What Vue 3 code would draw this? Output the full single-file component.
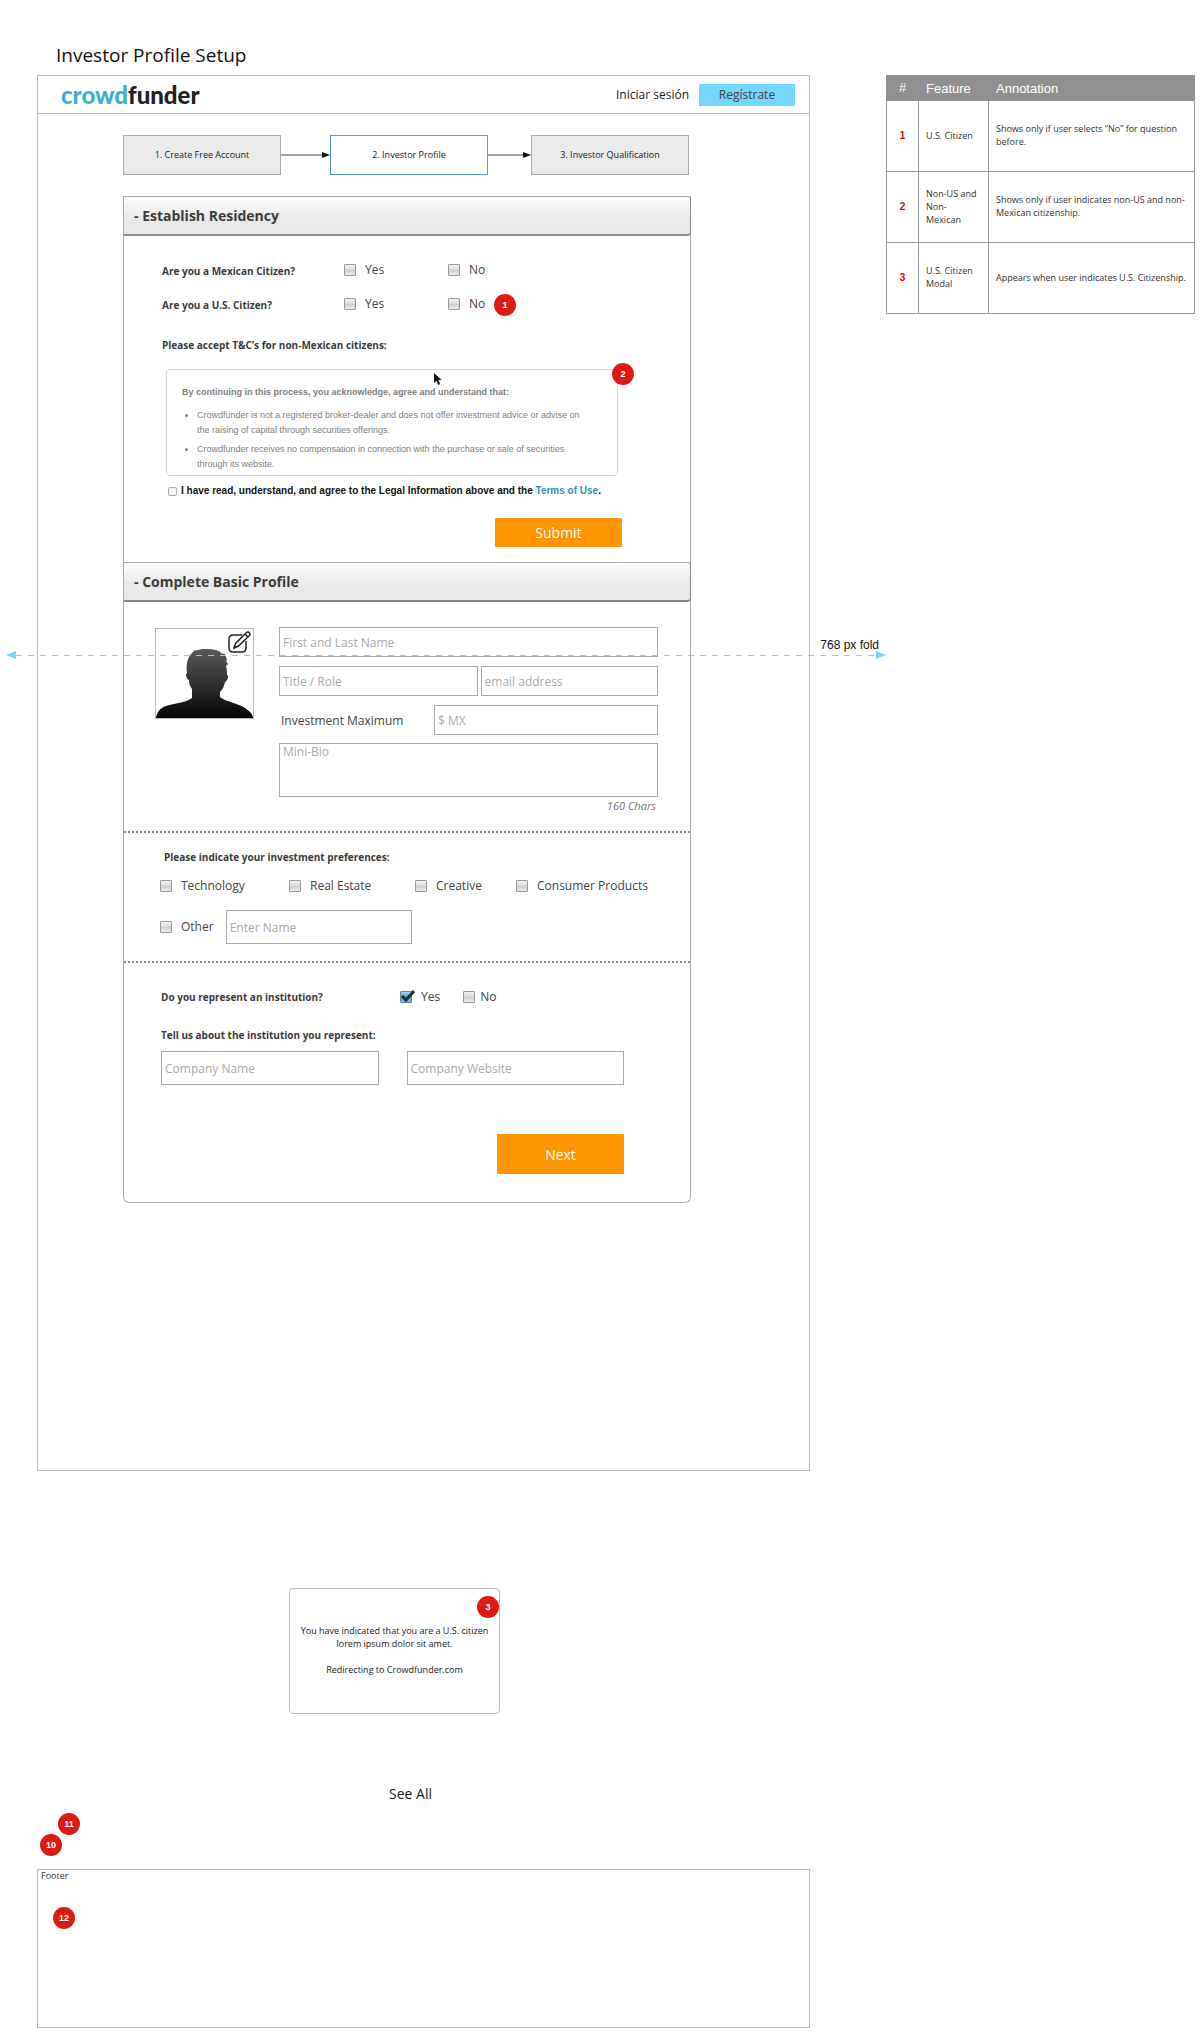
<script setup>
import { ref } from 'vue'

const annotations = [
  { id: 1, feature: 'U.S. Citizen', text: 'Shows only if user selects “No” for question before.' },
  { id: 2, feature: 'Non-US and Non-Mexican', text: 'Shows only if user indicates non-US and non-Mexican citizenship.' },
  { id: 3, feature: 'U.S. Citizen Modal', text: 'Appears when user indicates U.S. Citizenship.' },
]
const preferences = ['Technology', 'Real Estate', 'Creative', 'Consumer Products']
const institutionYes = ref(true)
</script>

<template>
  <div class="page">
    <h1 class="title">Investor Profile Setup</h1>

    <div class="columns">
      <main class="frame">
        <header class="topbar">
          <a class="logo" href="#"><span class="logo-blue">crowd</span>funder</a>
          <nav class="account">
            <a class="signin" href="#">Iniciar sesión</a>
            <button class="register" type="button">Regístrate</button>
          </nav>
        </header>

        <div class="content">
          <div class="steps">
            <div class="step">1. Create Free Account</div>
            <svg class="arrow first" viewBox="0 0 49 8"><path d="M0 4H43" /><path class="head" d="M41 1L49 4L41 7Z" /></svg>
            <div class="step current">2. Investor Profile</div>
            <svg class="arrow" viewBox="0 0 43 8"><path d="M0 4H37" /><path class="head" d="M35 1L43 4L35 7Z" /></svg>
            <div class="step">3. Investor Qualification</div>
          </div>

          <div class="panel">
            <h2 class="panel-head">- Establish Residency</h2>
            <form class="residency" @submit.prevent>
              <div class="question">
                <span class="bold">Are you a Mexican Citizen?</span>
                <label class="check"><input type="checkbox" />Yes</label>
                <label class="check"><input type="checkbox" />No</label>
              </div>
              <div class="question">
                <span class="bold">Are you a U.S. Citizen?</span>
                <label class="check"><input type="checkbox" />Yes</label>
                <label class="check"><input type="checkbox" />No</label>
                <span class="badge badge-1">1</span>
              </div>
              <p class="bold accept">Please accept T&amp;C’s for non-Mexican citizens:</p>
              <div class="terms">
                <p class="terms-title">By continuing in this process, you acknowledge, agree and understand that:</p>
                <ul>
                  <li>Crowdfunder is not a registered broker-dealer and does not offer investment advice or advise on the raising of capital through securities offerings.</li>
                  <li>Crowdfunder receives no compensation in connection with the purchase or sale of securities through its website.</li>
                </ul>
                <span class="badge badge-2">2</span>
                <svg class="cursor" viewBox="0 0 10 14"><path d="M1 1V11L3.400 8.800L5.200 13L7.200 12.100L5.400 8H8.600Z" /></svg>
              </div>
              <div class="agree">
                <input id="agree" type="checkbox" class="mini" />
                <label for="agree">I have read, understand, and agree to the Legal Information above and the <a href="#">Terms of Use</a>.</label>
              </div>
              <button class="action submit" type="submit">Submit</button>
            </form>

            <h2 class="panel-head">- Complete Basic Profile</h2>
            <form @submit.prevent>
              <div class="profile">
                <div class="avatar">
                  <svg viewBox="0 0 97 89">
                    <defs>
                      <linearGradient id="shade" x1="0" y1="0" x2="0" y2="1">
                        <stop offset="0" stop-color="#5a5a5a" />
                        <stop offset="1" stop-color="#050505" />
                      </linearGradient>
                    </defs>
                    <path fill="url(#shade)" d="M0 89C1 83 4 79 10 77C19 74 29 74 36 69V60C34 57 33 55 33 51C30 50 29 43 31 45C30 36 31 30 35 25L38 22L36 22L42 21L46 20L54 20L60 21L65 23L64 24L69 25L70 28L71 31L70 32L72 35L70 37C71 40 71 43 71 46C73 45 72 52 69 53C68 57 67 60 64 63V68C70 73 82 74 89 79C94 82 97 86 97 89Z" />
                  </svg>
                  <button class="edit" type="button" aria-label="Edit photo">
                    <svg viewBox="0 0 24 24">
                      <path d="M15 4H6Q2 4 2 8V17Q2 21 6 21H15Q19 21 19 17V10" />
                      <path d="M7 17L8.500 12.500L19.500 1.500Q21 0.500 22.300 1.800T22.400 4.500L11.500 15Z M18 3L21 6" />
                    </svg>
                  </button>
                </div>
                <div class="fields">
                  <input class="field" type="text" placeholder="First and Last Name" aria-label="First and Last Name" />
                  <div class="pair">
                    <input class="field role" type="text" placeholder="Title / Role" aria-label="Title / Role" />
                    <input class="field email" type="email" placeholder="email address" aria-label="email address" />
                  </div>
                  <div class="invest">
                    <label for="maximum">Investment Maximum</label>
                    <input id="maximum" class="field" type="text" placeholder="$ MX" />
                  </div>
                  <textarea class="field bio" placeholder="Mini-Bio" aria-label="Mini-Bio"></textarea>
                  <span class="chars">160 Chars</span>
                </div>
              </div>

              <div class="preferences">
                <p class="bold">Please indicate your investment preferences:</p>
                <div class="options">
                  <label v-for="name in preferences" :key="name" class="check"><input type="checkbox" />{{ name }}</label>
                </div>
                <div class="other">
                  <label class="check"><input type="checkbox" />Other</label>
                  <input class="field tall" type="text" placeholder="Enter Name" aria-label="Enter Name" />
                </div>
              </div>

              <div class="institution">
                <div class="represent">
                  <span class="bold">Do you represent an institution?</span>
                  <label class="check">
                    <span class="tick">
                      <input v-model="institutionYes" type="checkbox" />
                      <svg v-if="institutionYes" viewBox="0 0 15 13"><path d="M2 6L6 10L14 1" /></svg>
                    </span>Yes
                  </label>
                  <label class="check near"><input type="checkbox" />No</label>
                </div>
                <p class="bold">Tell us about the institution you represent:</p>
                <div class="companies">
                  <input class="field tall" type="text" placeholder="Company Name" aria-label="Company Name" />
                  <input class="field tall" type="text" placeholder="Company Website" aria-label="Company Website" />
                </div>
                <button class="action next" type="submit">Next</button>
              </div>
            </form>
          </div>
        </div>
      </main>

      <table class="notes">
        <thead>
          <tr><th class="num">#</th><th class="feature">Feature</th><th>Annotation</th></tr>
        </thead>
        <tbody>
          <tr v-for="row in annotations" :key="row.id">
            <td class="num">{{ row.id }}</td>
            <td>{{ row.feature }}</td>
            <td>{{ row.text }}</td>
          </tr>
        </tbody>
      </table>
    </div>

    <div class="below">
      <section class="modal">
        <p>You have indicated that you are a U.S. citizen lorem ipsum dolor sit amet.</p>
        <p>Redirecting to Crowdfunder.com</p>
        <span class="badge badge-3">3</span>
      </section>
      <a class="see-all" href="#">See All</a>
      <span class="badge badge-11">11</span>
      <span class="badge badge-10">10</span>
      <footer class="footer">
        Footer
        <span class="badge badge-12">12</span>
      </footer>
    </div>

    <div class="fold">
      <svg class="tip" viewBox="0 0 10 8"><path d="M10 0L0 4L10 8Z" /></svg>
      <span class="dashes"></span>
      <svg class="tip" viewBox="0 0 10 8"><path d="M0 0L10 4L0 8Z" /></svg>
      <span class="fold-label">768 px fold</span>
    </div>
  </div>
</template>

<style>
body {
  margin: 0;
  background: #fff;
}
</style>

<style scoped>
* {
  box-sizing: border-box;
}
.page {
  position: relative;
  padding: 42px 5px 10px 37px;
  font-family: "Open Sans", "Noto Sans", sans-serif;
  font-size: 12px;
  color: #444;
}
h1, h2, p, ul {
  margin: 0;
  padding: 0;
}
a {
  color: inherit;
  text-decoration: none;
}
button {
  border: 0;
  padding: 0;
  font-family: inherit;
  cursor: pointer;
}
.title {
  padding-left: 19px;
  height: 33px;
  font-size: 19px;
  line-height: 26px;
  font-weight: 400;
  color: #111;
}
.columns {
  display: flex;
  align-items: flex-start;
  gap: 76px;
}
.frame {
  flex: 1;
  min-width: 0;
  padding-bottom: 267px;
  border: 1px solid #bbb;
}
.topbar {
  display: flex;
  align-items: center;
  justify-content: space-between;
  height: 38px;
  padding: 0 14px 0 23px;
  border-bottom: 1px solid #bbb;
}
.logo {
  font-family: "Lato", sans-serif;
  font-size: 24px;
  line-height: 30px;
  font-weight: 900;
  color: #222;
}
.logo-blue {
  color: #3bafd2;
}
.account {
  display: flex;
  align-items: center;
  gap: 10px;
}
.signin {
  color: #222;
}
.register {
  width: 96px;
  height: 22px;
  border-radius: 1px;
  background: #74d5ff;
  font-size: 12px;
  color: #444;
}
.content {
  padding: 21px 118px 0 85px;
}
.steps {
  display: flex;
  align-items: center;
  margin: 0 2px 21px 0;
}
.step {
  flex: 1;
  height: 40px;
  border: 1px solid #aaa;
  background: #eaeaea;
  font-size: 9px;
  line-height: 38px;
  text-align: center;
  color: #222;
}
.step.current {
  border-color: #5a98d4;
  background: #fff;
}
.arrow {
  width: 43px;
  height: 8px;
  fill: none;
  stroke: #444;
}
.arrow.first {
  width: 49px;
}
.arrow .head {
  fill: #111;
  stroke: none;
}
.panel {
  border: 1px solid #aaa;
  border-top: 0;
  border-radius: 3px 3px 6px 6px;
}
.panel-head {
  height: 40px;
  margin: 0 -1px;
  padding-left: 10px;
  border: 1px solid #aaa;
  border-right-color: #888;
  border-bottom: 2px solid #888;
  border-radius: 2px 3px 4px 2px;
  background: linear-gradient(#fdfdfd, #e9e9e9 60%, #e8e8e8);
  font-size: 14px;
  line-height: 37px;
  font-weight: 700;
  color: #3b3b3b;
}
.bold {
  font-size: 10px;
  line-height: 14px;
  font-weight: 700;
  color: #3b3b3b;
}
.residency {
  display: flex;
  flex-direction: column;
  padding: 24px 68px 15px 38px;
}
.question {
  position: relative;
  display: flex;
  align-items: center;
  height: 20px;
  margin-bottom: 14px;
}
.question .bold {
  width: 182px;
  padding-top: 2px;
}
.question .check {
  width: 104px;
}
.check {
  display: flex;
  align-items: center;
  gap: 9px;
  line-height: 18px;
  white-space: nowrap;
}
.check input {
  appearance: none;
  flex: none;
  display: block;
  width: 12px;
  height: 12px;
  margin: 0;
  border: 1px solid #999;
  border-radius: 1px;
  background: linear-gradient(#f3f3f3, #dcdcdc 45%, #cfcfcf 55%, #ececec);
}
.check input:checked {
  border-color: #6687a5;
  background: linear-gradient(#a9d2f5, #4ea2e6 50%, #6fbcf3);
}
.tick {
  position: relative;
}
.tick svg {
  position: absolute;
  left: 0;
  top: -1px;
  width: 15px;
  height: 13px;
  fill: none;
  stroke: #2b2b2b;
  stroke-width: 3;
}
.badge {
  position: absolute;
  width: 22px;
  height: 22px;
  border-radius: 50%;
  background: #dc1b14;
  font-family: "Liberation Sans", Arial, sans-serif;
  font-size: 9px;
  line-height: 22px;
  font-weight: 700;
  text-align: center;
  color: #fff;
}
.badge-1 {
  left: 332px;
  top: 0;
}
.accept {
  margin-top: 10px;
}
.terms {
  position: relative;
  min-height: 107px;
  margin: 17px 4px 0;
  padding: 15px 26px 0 15px;
  border: 1px solid #d4d4d4;
  border-radius: 4px;
  font-family: "Liberation Sans", Arial, sans-serif;
  font-size: 9px;
  line-height: 15px;
  color: #808080;
}
.terms-title {
  font-weight: 700;
}
.terms ul {
  padding-left: 15px;
}
.terms li {
  margin-top: 4px;
}
.terms li:first-child {
  margin-top: 8px;
}
.badge-2 {
  right: -17px;
  top: -7px;
}
.cursor {
  position: absolute;
  left: 266px;
  top: 2px;
  width: 10px;
  height: 14px;
  fill: #111;
}
.agree {
  display: flex;
  align-items: center;
  gap: 4px;
  margin: 8px 0 0 6px;
  font-family: "Liberation Sans", Arial, sans-serif;
  font-size: 10px;
  line-height: 14px;
  font-weight: 700;
  color: #111;
  white-space: nowrap;
}
.agree a {
  color: #3490b0;
}
.mini {
  appearance: none;
  flex: none;
  width: 9px;
  height: 9px;
  margin: 0;
  border: 1px solid #aaa;
  border-radius: 2px;
  background: #f5f5f5;
}
.action {
  align-self: flex-end;
  width: 127px;
  border-radius: 1px;
  background: #ff9500;
  font-size: 14px;
  color: #fff;
}
.submit {
  height: 29px;
  margin-top: 20px;
}
.field {
  display: block;
  width: 100%;
  height: 30px;
  margin: 0;
  padding: 0 3px;
  border: 1px solid #aaa;
  border-radius: 0;
  background: #fff;
  font-family: inherit;
  font-size: 12px;
  color: #444;
}
.field::placeholder {
  color: #aaa;
  opacity: 1;
}
.field.tall {
  height: 34px;
}
.profile {
  display: flex;
  align-items: flex-start;
  gap: 25px;
  padding: 25px 32px 17px 31px;
}
.avatar {
  position: relative;
  flex: none;
  width: 99px;
  height: 91px;
  margin-top: 1px;
  border: 1px solid #bbb;
}
.avatar > svg {
  display: block;
  width: 97px;
  height: 89px;
}
.edit {
  position: absolute;
  right: 2px;
  top: 2px;
  width: 24px;
  height: 24px;
  background: none;
}
.edit svg {
  display: block;
  fill: none;
  stroke: #222;
  stroke-width: 1.500;
}
.fields {
  flex: 1;
  min-width: 0;
  display: flex;
  flex-direction: column;
}
.pair {
  display: flex;
  gap: 3px;
  margin: 9px 0;
}
.role {
  flex: 199;
}
.email {
  flex: 177;
}
.invest {
  display: flex;
  align-items: center;
  padding-left: 2px;
}
.invest label {
  flex: none;
  width: 153px;
}
.bio {
  height: 54px;
  margin-top: 8px;
  padding-top: 0;
  line-height: 16px;
  resize: none;
}
.chars {
  align-self: flex-end;
  margin: 1px 2px 0 0;
  font-size: 11px;
  line-height: 16px;
  font-style: italic;
  color: #777;
}
.preferences {
  padding: 17px 41px 17px 36px;
  border-top: 2px dotted #888;
}
.preferences .bold {
  padding-left: 4px;
}
.options {
  display: grid;
  grid-template-columns: 129fr 126fr 101fr 133fr;
  margin-top: 13px;
}
.other {
  display: flex;
  align-items: center;
  gap: 12px;
  margin-top: 15px;
}
.other .field {
  width: 186px;
}
.institution {
  display: flex;
  flex-direction: column;
  padding: 25px 66px 28px 37px;
  border-top: 2px dotted #888;
}
.represent {
  display: flex;
  align-items: center;
  margin-bottom: 22px;
}
.represent .bold {
  width: 239px;
}
.check.near {
  gap: 5px;
  margin-left: 23px;
}
.companies {
  display: flex;
  gap: 28px;
  margin-top: 9px;
}
.next {
  height: 40px;
  margin-top: 49px;
}
.notes {
  flex: none;
  width: 309px;
  border-collapse: collapse;
  table-layout: fixed;
  font-size: 9px;
  line-height: 13px;
  color: #333;
}
.notes th {
  height: 25px;
  padding: 0 7px;
  border: 1px solid #909090;
  background: #909090;
  font-family: "Liberation Sans", Arial, sans-serif;
  font-size: 13px;
  font-weight: 400;
  text-align: left;
  color: #fff;
}
.notes td {
  height: 71px;
  padding: 0 7px 2px;
  border: 1px solid #999;
}
.notes .num {
  width: 32px;
  padding: 0 0 2px;
  text-align: center;
}
.notes td.num {
  font-family: "Liberation Sans", Arial, sans-serif;
  font-size: 10px;
  font-weight: 700;
  color: #e60012;
}
.notes .feature {
  width: 70px;
}
.below {
  position: relative;
  display: flex;
  flex-direction: column;
  margin-right: 385px;
}
.modal {
  position: relative;
  display: flex;
  flex-direction: column;
  justify-content: center;
  gap: 13px;
  width: 211px;
  height: 126px;
  margin: 117px 0 0 252px;
  padding: 0 8px 2px;
  border: 1px solid #bbb;
  border-radius: 4px;
  font-size: 9px;
  line-height: 13px;
  text-align: center;
  color: #222;
}
.badge-3 {
  right: 0;
  top: 7px;
}
.see-all {
  align-self: center;
  margin-top: 70px;
  margin-right: 26px;
  font-size: 14px;
  line-height: 20px;
  color: #222;
}
.badge-11 {
  left: 21px;
  top: 342px;
}
.badge-10 {
  left: 3px;
  top: 363px;
}
.footer {
  position: relative;
  height: 159px;
  margin-top: 65px;
  padding-left: 3px;
  border: 1px solid #bbb;
  font-size: 9px;
  line-height: 12px;
  color: #333;
}
.badge-12 {
  left: 15px;
  top: 37px;
}
.fold {
  position: absolute;
  left: 6px;
  right: 314px;
  top: 651px;
  display: flex;
  align-items: center;
}
.tip {
  flex: none;
  width: 10px;
  height: 8px;
  fill: #74d5ff;
}
.dashes {
  flex: 1;
  height: 1px;
  background: repeating-linear-gradient(90deg, #74d5ff 0 6px, transparent 6px 12px);
}
.fold-label {
  position: absolute;
  right: 7px;
  bottom: 7px;
  font-family: "Liberation Sans", Arial, sans-serif;
  font-size: 12px;
  line-height: 14px;
  color: #111;
}
</style>
